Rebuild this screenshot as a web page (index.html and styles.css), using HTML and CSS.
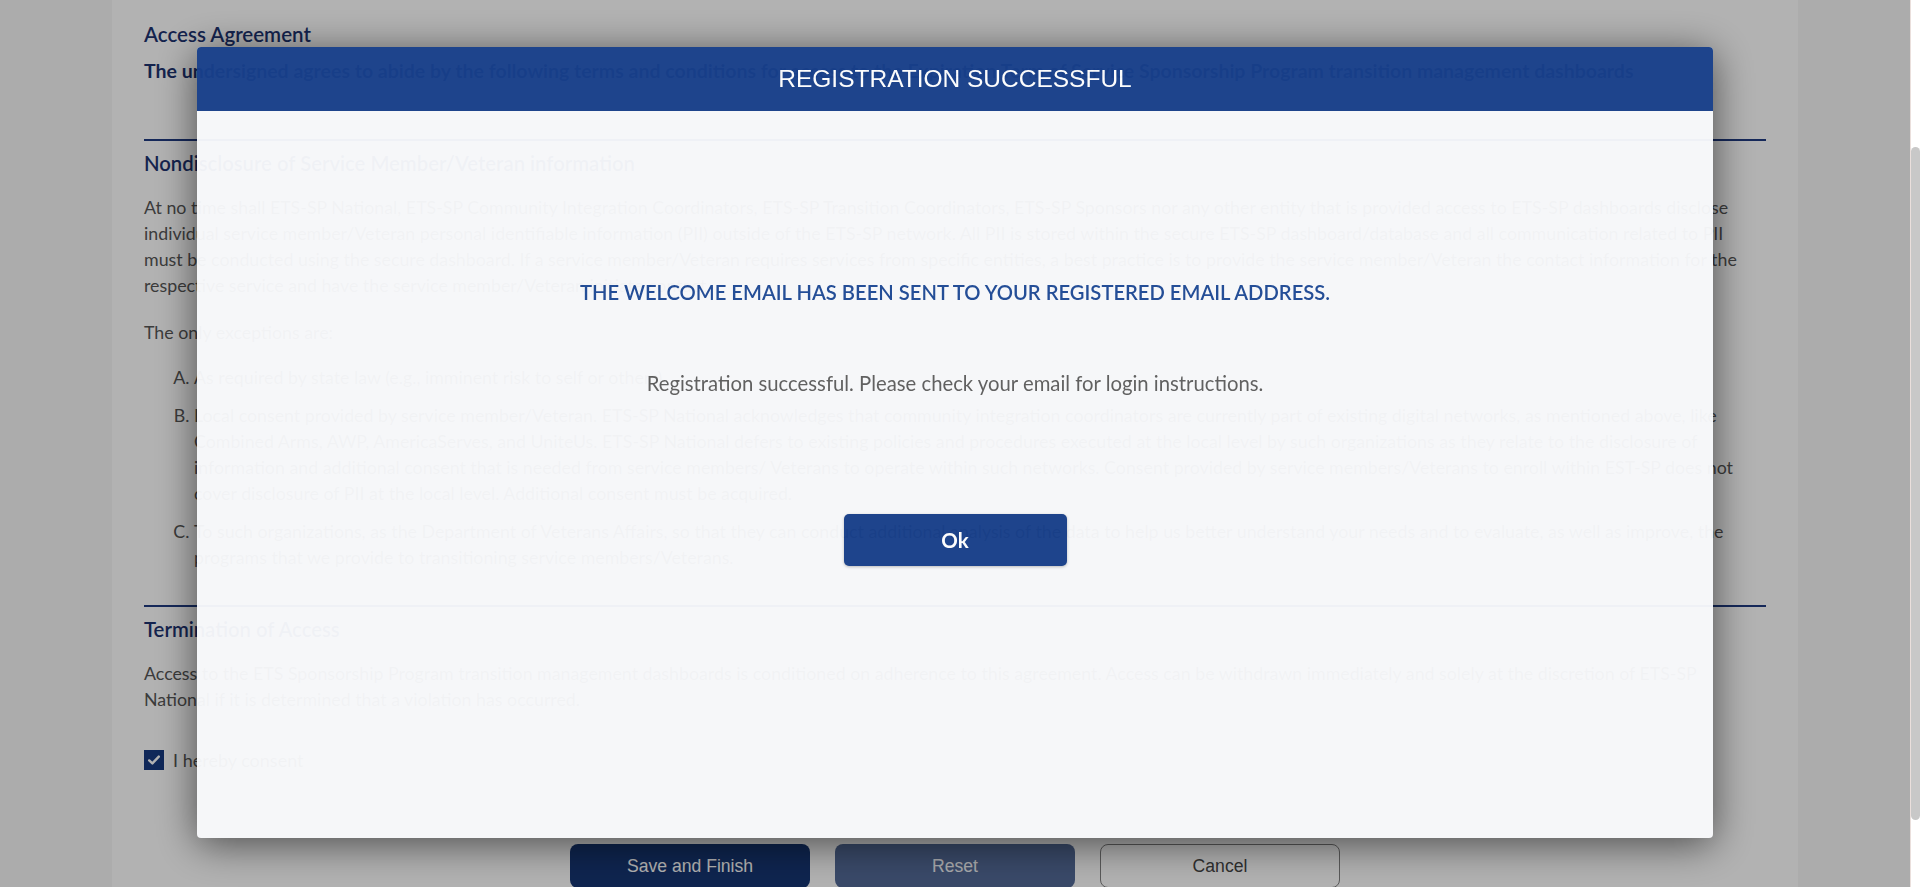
FILE: index.html
```html
<!DOCTYPE html>
<html lang="en">
<head>
<meta charset="utf-8">
<title>Access Agreement</title>
<link rel="stylesheet" href="styles.css">
</head>
<body>
<div class="page">
  <main class="card">
    <h2 class="title">Access Agreement</h2>
    <p class="intro">The undersigned agrees to abide by the following terms and conditions for access to the Expiration Term of Service Sponsorship Program transition management dashboards</p>
    <hr class="rule">
    <section class="section">
      <h3 class="sec-title">Nondisclosure of Service Member/Veteran information</h3>
      <p class="para">At no time shall ETS-SP National, ETS-SP Community Integration Coordinators, ETS-SP Transition Coordinators, ETS-SP Sponsors nor any other entity that is provided access to ETS-SP dashboards disclose individual service member/Veteran personal identifiable information (PII) outside of the ETS-SP network. All PII is stored within the secure ETS-SP dashboard/database and all communication related to PII must be conducted using the secure dashboard. If a service member/Veteran requires services from specific entities, a best practice is to provide the service member/Veteran the contact information for the respective service and have the service member/Veteran initiate contact.</p>
      <p class="para para-gap">The only exceptions are:</p>
      <ol class="list">
        <li>As required by state law (e.g., imminent risk to self or others).</li>
        <li>Local consent provided by service member/Veteran. ETS-SP National acknowledges that community integration coordinators are currently part of existing digital networks, as mentioned above, like Combined Arms, AWP, AmericaServes, and UniteUs. ETS-SP National defers to existing policies and procedures executed at the local level by such organizations as they relate to the disclosure of information and additional consent that is needed from service members/ Veterans to operate within such networks. Consent provided by service members/Veterans to enroll within EST-SP does not cover disclosure of PII at the local level. Additional consent must be acquired.</li>
        <li>To such organizations, as the Department of Veterans Affairs, so that they can conduct additional analysis of the data to help us better understand your needs and to evaluate, as well as improve, the programs that we provide to transitioning service members/Veterans.</li>
      </ol>
    </section>
    <hr class="rule rule-second">
    <section class="section">
      <h3 class="sec-title">Termination of Access</h3>
      <p class="para">Access to the ETS Sponsorship Program transition management dashboards is conditioned on adherence to this agreement. Access can be withdrawn immediately and solely at the discretion of ETS-SP National if it is determined that a violation has occurred.</p>
    </section>
    <label class="consent">
      <span class="box"><svg viewBox="0 0 20 20" width="20" height="20"><path d="M5.2 10.4 L8.4 13.4 L14.8 6.6" fill="none" stroke="#ffffff" stroke-width="2.4" stroke-linecap="round" stroke-linejoin="round"/></svg></span>
      <span class="consent-text">I hereby consent</span>
    </label>
    <div class="actions">
      <button class="btn btn-save" type="button">Save and Finish</button>
      <button class="btn btn-reset" type="button">Reset</button>
      <button class="btn btn-cancel" type="button">Cancel</button>
    </div>
  </main>
</div>

<div class="backdrop"></div>

<div class="modal-wrap">
  <div class="modal">
    <div class="modal-header">
      <h1 class="modal-title">REGISTRATION SUCCESSFUL</h1>
    </div>
    <div class="modal-body">
      <h2 class="welcome">THE WELCOME EMAIL HAS BEEN SENT TO YOUR REGISTERED EMAIL ADDRESS.</h2>
      <p class="msg">Registration successful. Please check your email for login instructions.</p>
      <button class="ok" type="button">Ok</button>
    </div>
  </div>
</div>

<div class="scrollbar"><div class="thumb"></div></div>
</body>
</html>
```

FILE: styles.css
```css
* { box-sizing: border-box; }

html, body {
  margin: 0;
  padding: 0;
  height: 100%;
  overflow: hidden;
}

body {
  background: #f7f7f7;
  font-family: Lato, "Open Sans", "Liberation Sans", sans-serif;
  color: #565656;
}

.page {
  margin-right: 10px;
  padding: 0 112px;
}

.card {
  background: #ffffff;
  padding: 22px 32px 0;
  min-height: 900px;
}

.title {
  margin: 0;
  font-size: 20.5px;
  line-height: 24px;
  font-weight: 600;
  color: #1d3370;
}

.intro {
  margin: 13px 0 0;
  font-size: 19.5px;
  line-height: 24px;
  font-weight: 700;
  color: #1d3370;
  white-space: nowrap;
}

.rule {
  margin: 56px 0 0;
  border: 0;
  height: 2px;
  background: #1f3a80;
}

.rule-second { margin-top: 35px; }

.sec-title {
  margin: 10px 0 0;
  font-size: 20.3px;
  line-height: 24px;
  font-weight: 600;
  color: #1d3370;
}

.para {
  margin: 19px 0 0;
  font-size: 17.8px;
  line-height: 26px;
  color: #565656;
}

.para-gap { margin-top: 21px; }

.list {
  margin: 19px 0 0;
  padding: 0 10px 0 50px;
  list-style-type: upper-alpha;
  font-size: 17.8px;
  line-height: 26px;
  color: #565656;
}

.list li + li { margin-top: 12px; }

.consent {
  display: flex;
  align-items: center;
  gap: 9px;
  margin-top: 36px;
  height: 24px;
  font-size: 18px;
  color: #555555;
}

.box {
  width: 20px;
  height: 20px;
  background: #173a80;
  display: flex;
}

.actions {
  display: flex;
  justify-content: center;
  gap: 25px;
  margin-top: 72px;
}

.btn {
  width: 240px;
  height: 44px;
  border-radius: 8px;
  font-family: "Liberation Sans", Arial, sans-serif;
  font-size: 17.6px;
  border: 1px solid transparent;
}

.btn-save {
  background: #153572;
  color: #ffffff;
}

.btn-reset {
  background: #536a97;
  color: #f2f4f8;
}

.btn-cancel {
  background: #ffffff;
  border-color: #808080;
  color: #444444;
}

/* overlay */
.backdrop {
  position: fixed;
  top: 0;
  left: 0;
  bottom: 0;
  right: 10px;
  background: rgba(0, 0, 0, 0.3);
}

.modal-wrap {
  position: fixed;
  top: 0;
  left: 0;
  bottom: 0;
  right: 10px;
  display: flex;
  justify-content: center;
  align-items: flex-start;
  padding-top: 47px;
}

.modal {
  width: 1516px;
  height: 791px;
  display: flex;
  flex-direction: column;
  background: #f8f9fb;
  border-radius: 4px;
  overflow: hidden;
  opacity: 0.965;
  box-shadow: 0 6px 40px rgba(0, 0, 0, 0.6);
}

.modal-header {
  height: 64px;
  flex: none;
  background: #18408a;
  display: flex;
  align-items: center;
  justify-content: center;
}

.modal-title {
  margin: 0;
  font-family: "Liberation Sans", Arial, sans-serif;
  font-weight: 400;
  font-size: 24.5px;
  line-height: 28px;
  color: #ffffff;
}

.modal-body {
  flex: 1;
  display: flex;
  flex-direction: column;
  align-items: center;
  padding-top: 169px;
}

.welcome {
  margin: 0;
  font-size: 20.2px;
  line-height: 24px;
  font-weight: 600;
  color: #1f4a96;
}

.msg {
  margin: 66px 0 0;
  font-size: 20.3px;
  line-height: 26px;
  color: #5e5e5e;
}

.ok {
  margin-top: 118px;
  width: 223px;
  height: 52px;
  border: 0;
  border-radius: 5px;
  background: #18408a;
  color: #ffffff;
  font-family: Lato, "Open Sans", sans-serif;
  font-weight: 700;
  font-size: 20.5px;
  box-shadow: 0 1px 3px rgba(0, 0, 0, 0.25);
}

/* scrollbar */
.scrollbar {
  position: fixed;
  top: 0;
  right: 0;
  bottom: 0;
  width: 10px;
  background: #ffffff;
  border-left: 1px solid #eadfdc;
}

.thumb {
  margin-top: 147px;
  height: 673px;
  background: #c8c8c8;
  border-radius: 5px;
}
```
